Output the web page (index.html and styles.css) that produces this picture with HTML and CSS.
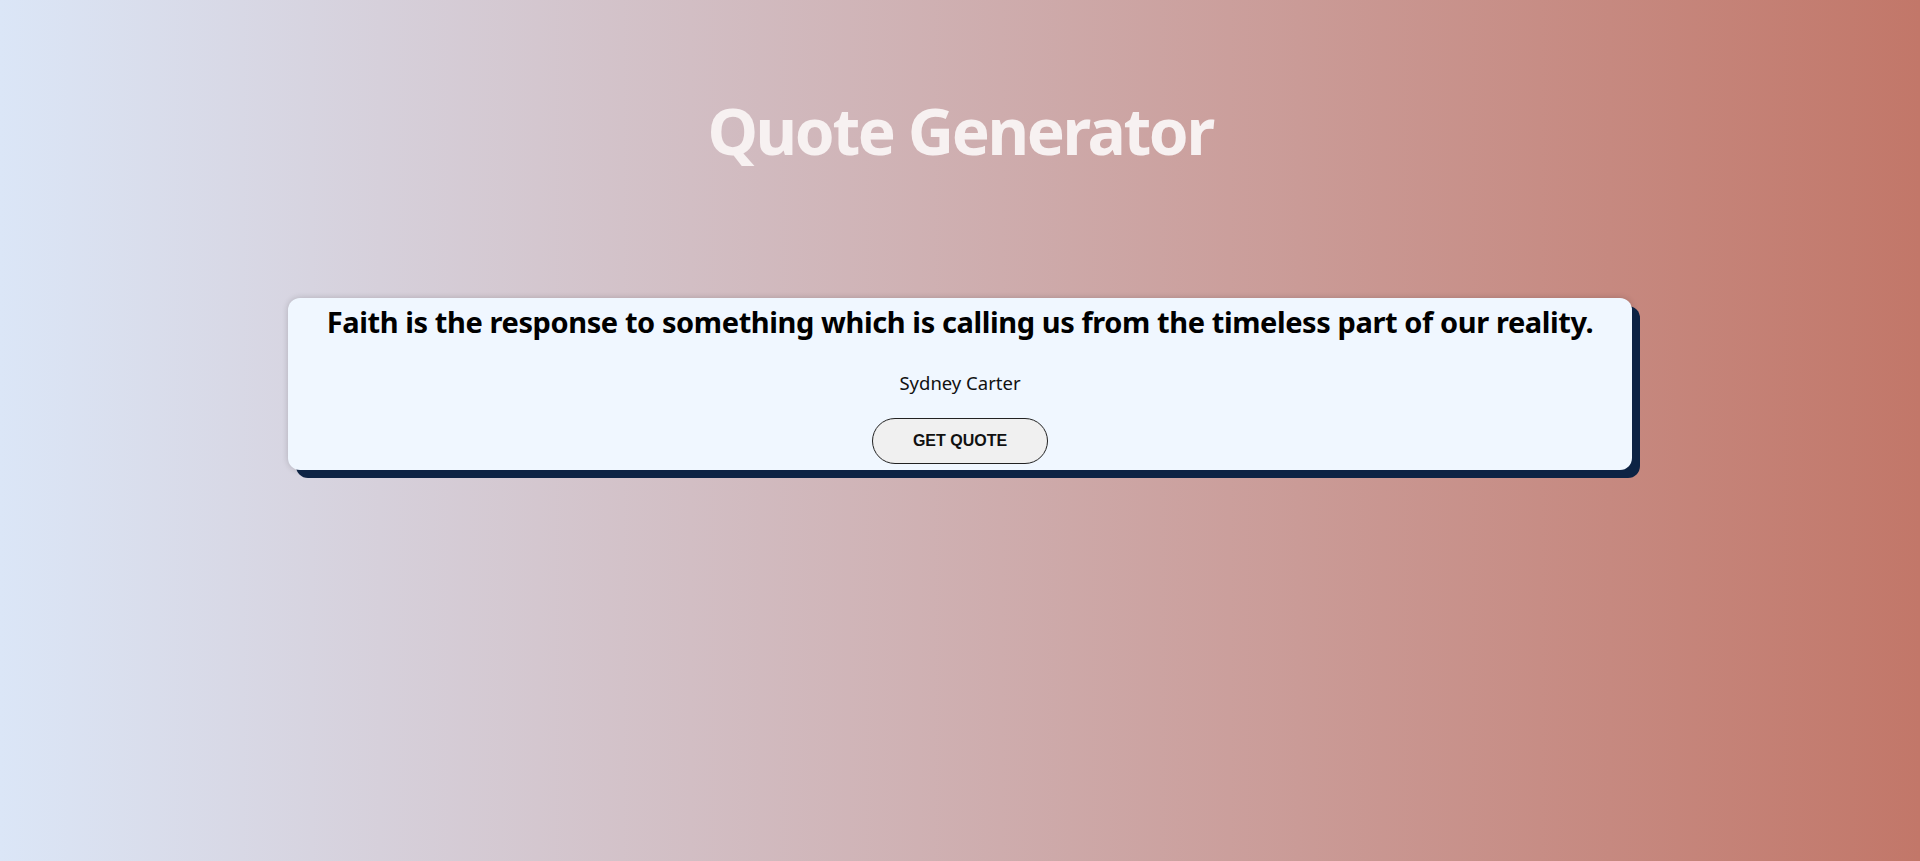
FILE: index.html
```html
<!DOCTYPE html>
<html lang="en">
<head>
<meta charset="utf-8">
<title>Quote Generator</title>
<link rel="stylesheet" href="styles.css">
</head>
<body>
<main class="page">
  <h1 class="title">Quote Generator</h1>
  <section class="card">
    <h2 class="quote">Faith is the response to something which is calling us from the timeless part of our reality.</h2>
    <p class="author">Sydney Carter</p>
    <button class="btn" type="button">GET QUOTE</button>
  </section>
</main>
</body>
</html>
```

FILE: styles.css
```css
html, body {
  margin: 0;
  padding: 0;
  height: 100%;
}
body {
  background: linear-gradient(to right, #dbe6f7, #c27769);
  font-family: "Noto Sans", "Open Sans", sans-serif;
  overflow: hidden;
}
.page {
  display: flex;
  flex-direction: column;
  align-items: center;
  padding-top: 87px;
}
.title {
  margin: 0;
  font-size: 64px;
  font-weight: 700;
  line-height: 88px;
  letter-spacing: -2.4px;
  color: #f7f1f1;
}
.card {
  margin-top: 123px;
  width: 1344px;
  box-sizing: border-box;
  padding: 4px 0 6px;
  background: #f0f7ff;
  border-radius: 12px;
  box-shadow: 8px 8px 0 #0d2344, 0 0 6px rgba(0,0,0,0.18);
  display: flex;
  flex-direction: column;
  align-items: center;
  text-align: center;
}
.quote {
  margin: 0;
  font-size: 29px;
  font-weight: 700;
  line-height: 40px;
  letter-spacing: -0.4px;
  white-space: nowrap;
  color: #000;
}
.author {
  margin: 28px 0 0;
  font-size: 18.5px;
  line-height: 26px;
  color: #111;
}
.btn {
  margin-top: 22px;
  width: 176px;
  height: 46px;
  flex: none;
  border: 1px solid #222;
  border-radius: 23px;
  background: #f0f0f0;
  font-family: "Liberation Sans", Arial, sans-serif;
  font-weight: 700;
  font-size: 16px;
  color: #111;
}
```
